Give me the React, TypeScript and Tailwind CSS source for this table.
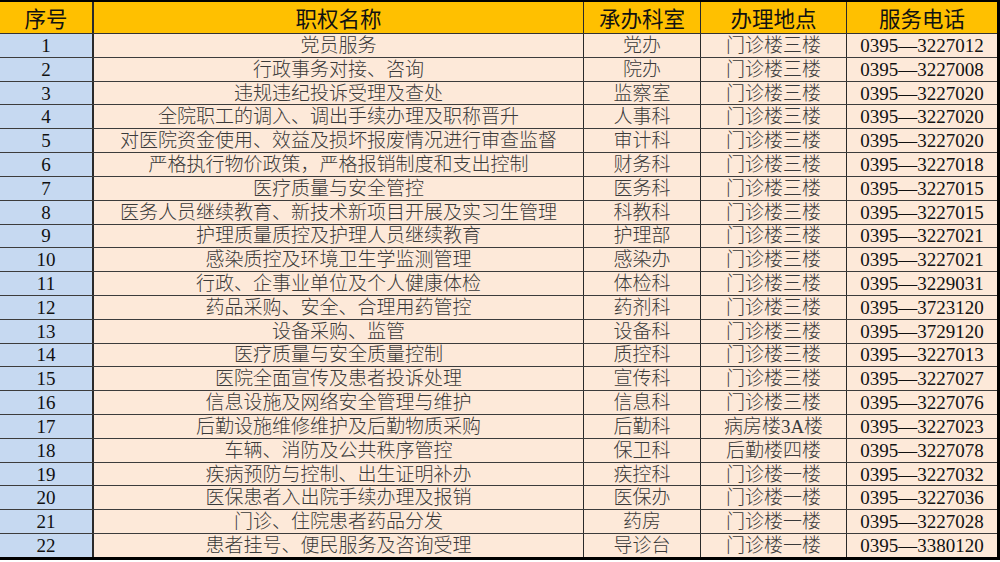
import React from "react";

type Row = {
  name: string;
  dept: string;
  place: string;
  phone: string;
};

const rows: Row[] = [
  { name: "党员服务", dept: "党办", place: "门诊楼三楼", phone: "3227012" },
  { name: "行政事务对接、咨询", dept: "院办", place: "门诊楼三楼", phone: "3227008" },
  { name: "违规违纪投诉受理及查处", dept: "监察室", place: "门诊楼三楼", phone: "3227020" },
  { name: "全院职工的调入、调出手续办理及职称晋升", dept: "人事科", place: "门诊楼三楼", phone: "3227020" },
  { name: "对医院资金使用、效益及损坏报废情况进行审查监督", dept: "审计科", place: "门诊楼三楼", phone: "3227020" },
  { name: "严格执行物价政策，严格报销制度和支出控制", dept: "财务科", place: "门诊楼三楼", phone: "3227018" },
  { name: "医疗质量与安全管控", dept: "医务科", place: "门诊楼三楼", phone: "3227015" },
  { name: "医务人员继续教育、新技术新项目开展及实习生管理", dept: "科教科", place: "门诊楼三楼", phone: "3227015" },
  { name: "护理质量质控及护理人员继续教育", dept: "护理部", place: "门诊楼三楼", phone: "3227021" },
  { name: "感染质控及环境卫生学监测管理", dept: "感染办", place: "门诊楼三楼", phone: "3227021" },
  { name: "行政、企事业单位及个人健康体检", dept: "体检科", place: "门诊楼三楼", phone: "3229031" },
  { name: "药品采购、安全、合理用药管控", dept: "药剂科", place: "门诊楼三楼", phone: "3723120" },
  { name: "设备采购、监管", dept: "设备科", place: "门诊楼三楼", phone: "3729120" },
  { name: "医疗质量与安全质量控制", dept: "质控科", place: "门诊楼三楼", phone: "3227013" },
  { name: "医院全面宣传及患者投诉处理", dept: "宣传科", place: "门诊楼三楼", phone: "3227027" },
  { name: "信息设施及网络安全管理与维护", dept: "信息科", place: "门诊楼三楼", phone: "3227076" },
  { name: "后勤设施维修维护及后勤物质采购", dept: "后勤科", place: "病房楼3A楼", phone: "3227023" },
  { name: "车辆、消防及公共秩序管控", dept: "保卫科", place: "后勤楼四楼", phone: "3227078" },
  { name: "疾病预防与控制、出生证明补办", dept: "疾控科", place: "门诊楼一楼", phone: "3227032" },
  { name: "医保患者入出院手续办理及报销", dept: "医保办", place: "门诊楼一楼", phone: "3227036" },
  { name: "门诊、住院患者药品分发", dept: "药房", place: "门诊楼一楼", phone: "3227028" },
  { name: "患者挂号、便民服务及咨询受理", dept: "导诊台", place: "门诊楼一楼", phone: "3380120" },
];

const cols = "grid grid-cols-[94px_490px_117px_146px_150px]";
const headCell =
  "flex items-center justify-center border-r border-[#2a2a2a] bg-[#ffc000] text-[21.5px] leading-none text-[#111]";
const bodyCell =
  "flex items-center justify-center border-r border-[#2a2a2a] text-[19px] leading-none text-[#3a3a3a]";

export default function App() {
  return (
    <div className="h-[562px] w-[1000px] bg-white">
      <div className="flex h-[560px] flex-col border-t-2 border-r-[3px] border-b-[3px] border-black">
        <div
          className={`${cols} h-[32px] border-b border-[#333] font-['Noto_Sans_CJK_SC',sans-serif]`}
        >
          <div className={`${headCell} border-r-2 bg-[#c6d9f1]`}>序号</div>
          <div className={headCell}>职权名称</div>
          <div className={headCell}>承办科室</div>
          <div className={headCell}>办理地点</div>
          <div className={`${headCell} border-r-0`}>服务电话</div>
        </div>

        <div className="flex flex-1 flex-col font-['Liberation_Serif','Noto_Sans_CJK_SC',serif]">
          {rows.map((r, i) => (
            <div
              key={i}
              className={`${cols} flex-1 ${i < rows.length - 1 ? "border-b border-[#3c3c3c]" : ""} bg-[#fde9d9]`}
            >
              <div className={`${bodyCell} border-r-2 bg-[#c6d9f1] text-[#111]`}>{i + 1}</div>
              <div className={`${bodyCell} font-light`}>{r.name}</div>
              <div className={`${bodyCell} font-light`}>{r.dept}</div>
              <div className={`${bodyCell} font-light`}>{r.place}</div>
              <div className={`${bodyCell} border-r-0 text-[18.5px] text-[#111]`}>
                0395—{r.phone}
              </div>
            </div>
          ))}
        </div>
      </div>
    </div>
  );
}
